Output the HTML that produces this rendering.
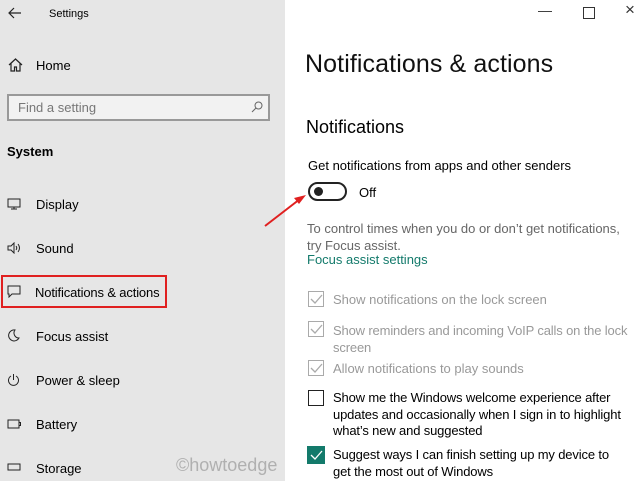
<!DOCTYPE html>
<html><head><style>
body{margin:0;width:640px;height:481px;overflow:hidden;font-family:"Liberation Sans",sans-serif;background:#fff;position:relative;color:#000}
.a{position:absolute;white-space:nowrap}
#side{position:absolute;left:0;top:0;width:285px;height:481px;background:#e6e6e6}
.t{font-size:13px}
.g{color:#8a8a8a}
.r{letter-spacing:-0.15px}
.cb{position:absolute;width:16px;height:16px;border:1.5px solid #aaa;box-sizing:border-box;left:308px}
</style></head><body>
<div id="side">
<svg class="a" style="left:8px;top:7px" width="14" height="12"><path d="M13 6H2M6 1L1 6l5 5" stroke="#222" fill="none" stroke-width="1.2"/></svg>
<div class="a" style="left:49px;top:8px;font-size:11px">Settings</div>
<svg class="a" style="left:8px;top:58px" width="15" height="14"><path d="M1 7L7.5 1 14 7M3 5.5V13h3.5V9h2v4H12V5.5" stroke="#222" fill="none" stroke-width="1.2"/></svg>
<div class="a" style="left:36px;top:58px;font-size:13px">Home</div>
<div class="a" style="left:7px;top:94px;width:263px;height:27px;border:2px solid #999;box-sizing:border-box;background:#f2f2f2"></div>
<div class="a g" style="left:18px;top:100px;font-size:13px;color:#777">Find a setting</div>
<svg class="a" style="left:251px;top:101px" width="12" height="12"><circle cx="7.5" cy="4.5" r="3.5" stroke="#666" fill="none"/><path d="M5 7L1 11" stroke="#666"/></svg>
<div class="a" style="left:7px;top:144px;font-size:13px;font-weight:bold">System</div>
<svg class="a" style="left:7px;top:198px" width="14" height="12"><path d="M1 1h12v8H1zM7 9v2M4 11h6" stroke="#222" fill="none"/></svg>
<div class="a t" style="left:36px;top:197px">Display</div>
<svg class="a" style="left:7px;top:242px" width="14" height="12"><path d="M1 4h3l3-3v10L4 8H1z" stroke="#222" fill="none"/><path d="M9 4q1.5 2 0 4M11 2q3 4 0 8" stroke="#222" fill="none"/></svg>
<div class="a t" style="left:36px;top:241px">Sound</div>
<div class="a" style="left:1px;top:275px;width:166px;height:33px;border:2px solid #e02020;box-sizing:border-box"></div>
<svg class="a" style="left:7px;top:285px" width="14" height="13"><path d="M1 1h12v8H5L2 12V9H1z" stroke="#222" fill="none"/></svg>
<div class="a t r" style="left:35px;top:285px">Notifications &amp; actions</div>
<svg class="a" style="left:8px;top:329px" width="12" height="13"><path d="M7 1A5.5 5.5 0 1 0 11 9 5 5 0 0 1 7 1z" stroke="#222" fill="none"/></svg>
<div class="a t" style="left:36px;top:329px">Focus assist</div>
<svg class="a" style="left:7px;top:373px" width="13" height="13"><path d="M4 3A5 5 0 1 0 9 3M6.5 1v6" stroke="#222" fill="none"/></svg>
<div class="a t" style="left:36px;top:373px">Power &amp; sleep</div>
<svg class="a" style="left:7px;top:419px" width="14" height="10"><path d="M1 1h11v8H1zM12 3.5h1.5v3H12" stroke="#222" fill="none"/></svg>
<div class="a t" style="left:36px;top:417px">Battery</div>
<svg class="a" style="left:7px;top:463px" width="14" height="8"><path d="M1 1h12v6H1z" stroke="#222" fill="none"/></svg>
<div class="a t" style="left:36px;top:461px">Storage</div>
</div>
<div class="a" style="left:176px;top:455px;font-size:18px;color:#b0b0b0">©howtoedge</div>
<div class="a" style="left:538px;top:2px;font-size:14px;color:#333">—</div>
<div class="a" style="left:583px;top:7px;width:10px;height:10px;border:1px solid #333"></div>
<div class="a" style="left:625px;top:0px;font-size:17px;color:#333">×</div>
<div class="a" style="left:305px;top:50px;font-size:25px;color:#111;letter-spacing:0.1px">Notifications &amp; actions</div>
<div class="a" style="left:306px;top:117px;font-size:18px">Notifications</div>
<div class="a t" style="left:308px;top:158px">Get notifications from apps and other senders</div>
<div class="a" style="left:308px;top:182px;width:39px;height:19px;border:2px solid #222;border-radius:10px;box-sizing:border-box"></div>
<div class="a" style="left:314px;top:187px;width:9px;height:9px;border-radius:50%;background:#222"></div>
<div class="a t" style="left:359px;top:185px">Off</div>
<svg class="a" style="left:262px;top:193px" width="46" height="36"><path d="M3 33L38 6" stroke="#e02020" stroke-width="2"/><path d="M44 2L32 5l5 6z" fill="#e02020"/></svg>
<div class="a t" style="left:307px;top:220px;color:#666;line-height:17px">To control times when you do or don’t get notifications,<br>try Focus assist.</div>
<div class="a t" style="left:307px;top:252px;color:#137a6b">Focus assist settings</div>
<div class="cb" style="top:291px"></div><svg class="a" style="left:310px;top:293px" width="13" height="12"><path d="M1 6l4 4 7-8" stroke="#aaa" fill="none" stroke-width="1.3"/></svg>
<div class="a t g" style="left:333px;top:292px;color:#999">Show notifications on the lock screen</div>
<div class="cb" style="top:321px"></div><svg class="a" style="left:310px;top:323px" width="13" height="12"><path d="M1 6l4 4 7-8" stroke="#aaa" fill="none" stroke-width="1.3"/></svg>
<div class="a t r" style="left:333px;top:322px;color:#999;line-height:17px">Show reminders and incoming VoIP calls on the lock<br>screen</div>
<div class="cb" style="top:360px"></div><svg class="a" style="left:310px;top:362px" width="13" height="12"><path d="M1 6l4 4 7-8" stroke="#aaa" fill="none" stroke-width="1.3"/></svg>
<div class="a t" style="left:333px;top:361px;color:#999">Allow notifications to play sounds</div>
<div class="cb" style="top:390px;border-color:#222"></div>
<div class="a t r" style="left:333px;top:390px;line-height:16.5px">Show me the Windows welcome experience after<br>updates and occasionally when I sign in to highlight<br>what’s new and suggested</div>
<div class="cb" style="top:446px;border:none;background:#137a6b;width:18px;height:18px;left:307px"></div><svg class="a" style="left:310px;top:449px" width="13" height="12"><path d="M1 6l4 4 7-8" stroke="#fff" fill="none" stroke-width="1.3"/></svg>
<div class="a t r" style="left:333px;top:446px;line-height:17px">Suggest ways I can finish setting up my device to<br>get the most out of Windows</div>
</body></html>
